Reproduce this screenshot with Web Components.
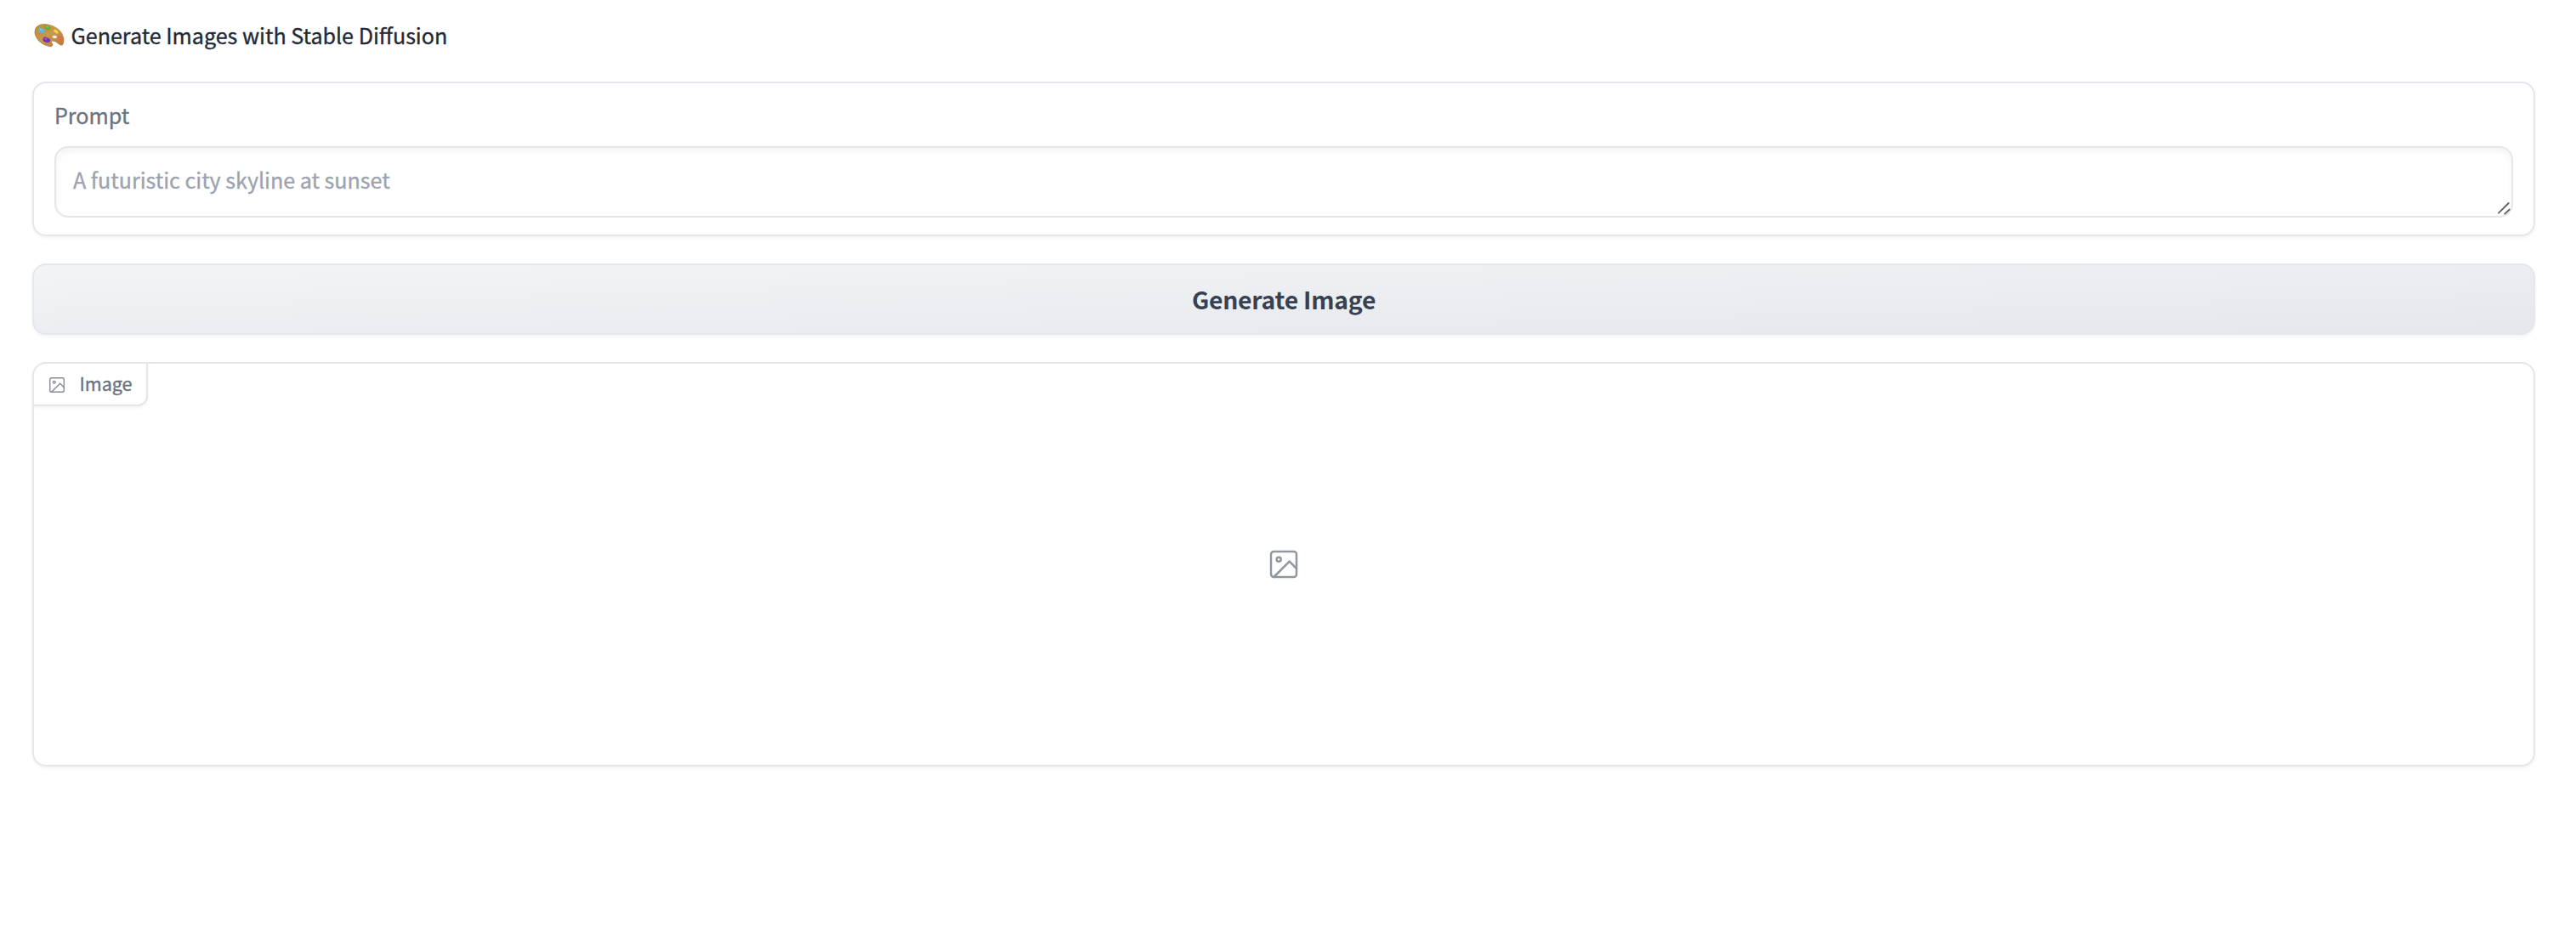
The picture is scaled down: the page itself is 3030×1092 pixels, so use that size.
<!DOCTYPE html>
<html lang="en">
<head>
<meta charset="utf-8">
<title>Generate Images with Stable Diffusion</title>
<style>
  html, body { margin: 0; height: 100%; background: #fff; }
  body {
    font-family: "Noto Sans CJK SC", "Open Sans", sans-serif;
    font-size: 25.08px;
    color: #1f2937;
    overflow: hidden;
    -webkit-text-stroke: .35px currentColor;
    --border: #e5e5eb;
    --muted: #6b7280;
    --placeholder: #9ca3af;
    --shadow: 0 2px 4px 0 rgba(0, 0, 0, .05);
  }
</style>
</head>
<body>
<sd-app>
  <sd-title>Generate Images with Stable Diffusion</sd-title>
  <sd-prompt label="Prompt">A futuristic city skyline at sunset</sd-prompt>
  <sd-button>Generate Image</sd-button>
  <sd-image-panel>Image</sd-image-panel>
</sd-app>
<script>
  const define = (name, html) => customElements.define(name, class extends HTMLElement {
    constructor() {
      super();
      const root = this.attachShadow({ mode: 'open' });
      const t = document.createElement('template');
      t.innerHTML = html;
      root.append(t.content.cloneNode(true));
    }
    connectedCallback() {
      const label = this.shadowRoot.querySelector('[data-label]');
      if (label) label.textContent = this.getAttribute('label');
    }
  });

  define('sd-app', `
    <style>
      :host { display: flex; flex-direction: column; gap: 32px; box-sizing: border-box; padding: 20px 48px 0 38px; }
    </style>
    <slot></slot>`);

  define('sd-palette-icon', `
    <style>
      :host { display: block; width: 36px; height: 30px; flex: none; }
      svg { display: block; }
    </style>
    <svg width="36" height="30" viewBox="0 0 36 30" role="img" aria-label="palette">
      <defs>
        <linearGradient id="wood" x1="0" y1="0" x2="1" y2="1">
          <stop offset="0" stop-color="#c08a3c"/><stop offset=".5" stop-color="#cc974a"/><stop offset="1" stop-color="#b87a35"/>
        </linearGradient>
      </defs>
      <path transform="translate(-.4 .8)" fill="#a98350" d="M1 9.600C1.400 3.600 6.500 .8 12.500 1C20 1.300 28.500 5.500 32.600 11.500C35.600 16 36 22.500 34.200 25C32.500 27 30 25 27.500 22.800C25.500 21 21.500 19.800 20.800 21.800C20.300 23.500 23.200 24.700 22.200 26.300C20 28.600 12 25.800 8.300 22.500C4 18.900 .7 14 1 9.600Z"/>
      <path fill="url(#wood)" d="M1 9.600C1.400 3.600 6.500 .8 12.500 1C20 1.300 28.500 5.500 32.600 11.500C35.600 16 36 22.500 34.200 25C32.500 27 30 25 27.500 22.800C25.500 21 21.500 19.800 20.800 21.800C20.300 23.500 23.200 24.700 22.200 26.300C20 28.600 12 25.800 8.300 22.500C4 18.900 .7 14 1 9.600Z"/>
      <ellipse cx="24.200" cy="15.900" rx="2.700" ry="2.100" transform="rotate(15 24.200 15.900)" fill="#fff"/>
      <path d="M21.700 15.400Q23.500 12.800 26.700 15.200" fill="none" stroke="#87602f" stroke-width=".8"/>
      <path fill="#58b9df" d="M5.700 6.200C7.700 4.800 8.500 6.300 10.500 6.900C13 7.600 13.300 9.900 11.800 11.300C10 12.900 9.500 11.500 7.300 11.200C4.700 10.700 4.200 7.400 5.700 6.200Z"/>
      <path fill="#53b735" d="M12.700 3.600C14 1.900 15.300 3.400 17 3.700C19.600 4 20.500 6.500 18.800 7.700C17.300 8.600 16.300 7.500 14.600 7.200C12.500 6.800 11.700 5 12.700 3.600Z"/>
      <path fill="#ecd242" d="M23.600 8C24.700 6.800 25.600 7.900 27 9C28.900 10.500 29.500 12 28.100 12.500C26.800 13 26 12 24.700 11.300C23.100 10.500 22.700 9 23.600 8Z"/>
      <path fill="#e76655" d="M28.500 15.600C29.500 14.700 31 16 32.500 17.600C34.300 19.500 34.900 21.500 33.700 22.100C32.500 22.500 31.900 21.300 30.400 20.100C28.600 18.700 27.600 16.700 28.500 15.600Z"/>
      <path fill="#7433b2" d="M11 17.600C12.500 15.600 13.800 17 15.700 17.600C18.600 18.300 20 20.200 18.600 22C17.200 23.700 15.500 23.200 13.400 22.700C10.500 22 9.700 19.400 11 17.600Z"/>
      <path d="M7.200 7.400l2 .8M14.500 4.500l2 .6M25 9l1.300.8M12.800 18.400l2 .7" stroke="#fff" stroke-opacity=".4" stroke-linecap="round"/>
    </svg>`);

  define('sd-title', `
    <style>
      :host { display: flex; gap: 7.500px; height: 44px; line-height: 42px; padding-left: 2px; box-sizing: border-box; white-space: nowrap; }
      sd-palette-icon { margin-top: 7px; }
    </style>
    <sd-palette-icon></sd-palette-icon><span><slot></slot></span>`);

  define('sd-prompt', `
    <style>
      :host { display: flex; flex-direction: column; gap: 16px; box-sizing: border-box; height: 182px;
        padding: 18px 24px 20px; border: 2px solid var(--border); border-radius: 16px; box-shadow: var(--shadow); }
      .label { height: 40px; line-height: 38px; color: var(--muted); }
      .field { position: relative; box-sizing: border-box; height: 84px; padding: 0 20px; border: 2px solid var(--border);
        border-radius: 16px; line-height: 74px; color: var(--placeholder); box-shadow: inset 0 4px 8px 0 rgba(0, 0, 0, .05); white-space: nowrap; }
      .grip { position: absolute; right: 1px; bottom: 1px; }
    </style>
    <div class="label" data-label></div>
    <div class="field"><slot></slot>
      <svg class="grip" width="15" height="15" viewBox="0 0 15 15" fill="none" stroke="#606060" stroke-width="1.800" stroke-linecap="round">
        <path d="M1 12.700L12.700 1M8.300 13.700L13.700 8.500"/>
      </svg>
    </div>`);

  define('sd-button', `
    <style>
      :host { display: block; height: 84px; }
      button { display: flex; align-items: center; justify-content: center; width: 100%; height: 100%; box-sizing: border-box;
        margin: 0; padding: 0; border: 2px solid #e5e7eb; border-radius: 16px; color: #374151;
        background: linear-gradient(to bottom right, #f3f4f6, #e5e7eb) border-box; box-shadow: var(--shadow);
        font: 700 28.3px/40px "Noto Sans CJK SC", "Open Sans", sans-serif; letter-spacing: -.22px; -webkit-text-stroke: 0; }
    </style>
    <button type="button"><span><slot></slot></span></button>`);

  define('sd-picture-icon', `
    <style>
      :host { display: block; flex: none; width: var(--size); height: var(--size); color: var(--ink); }
      svg { display: block; width: 100%; height: 100%; }
    </style>
    <svg viewBox="0 0 24 24" fill="none" stroke="currentColor" stroke-width="1.500" stroke-linecap="round" stroke-linejoin="round">
      <rect x="3" y="3" width="18" height="18" rx="2"/><circle cx="8.500" cy="8.500" r="1.500"/><path d="M21 15l-5-5L5 21"/>
    </svg>`);

  define('sd-image-panel', `
    <style>
      :host { display: flex; flex-direction: column; align-items: flex-start; box-sizing: border-box; height: 476px;
        border: 2px solid var(--border); border-radius: 16px; box-shadow: var(--shadow); overflow: hidden; }
      .tab { display: flex; align-items: center; gap: 15.500px; box-sizing: border-box; width: 134px; height: 50px; padding-left: 16px;
        border: solid var(--border); border-width: 0 2px 2px 0; border-radius: 0 0 12px 0; box-shadow: var(--shadow);
        color: var(--muted); font-size: 21.500px; line-height: 45px; }
      .tab sd-picture-icon { --size: 22px; --ink: #868b96; margin-top: 1px; }
      .tab span { margin-top: -3px; }
      .empty { flex: 1; align-self: stretch; display: flex; align-items: center; justify-content: center; margin-top: -50px; }
      .empty sd-picture-icon { --size: 40px; --ink: #92969f; }
    </style>
    <div class="tab"><sd-picture-icon></sd-picture-icon><span><slot></slot></span></div>
    <div class="empty"><sd-picture-icon></sd-picture-icon></div>`);
</script>
</body>
</html>
